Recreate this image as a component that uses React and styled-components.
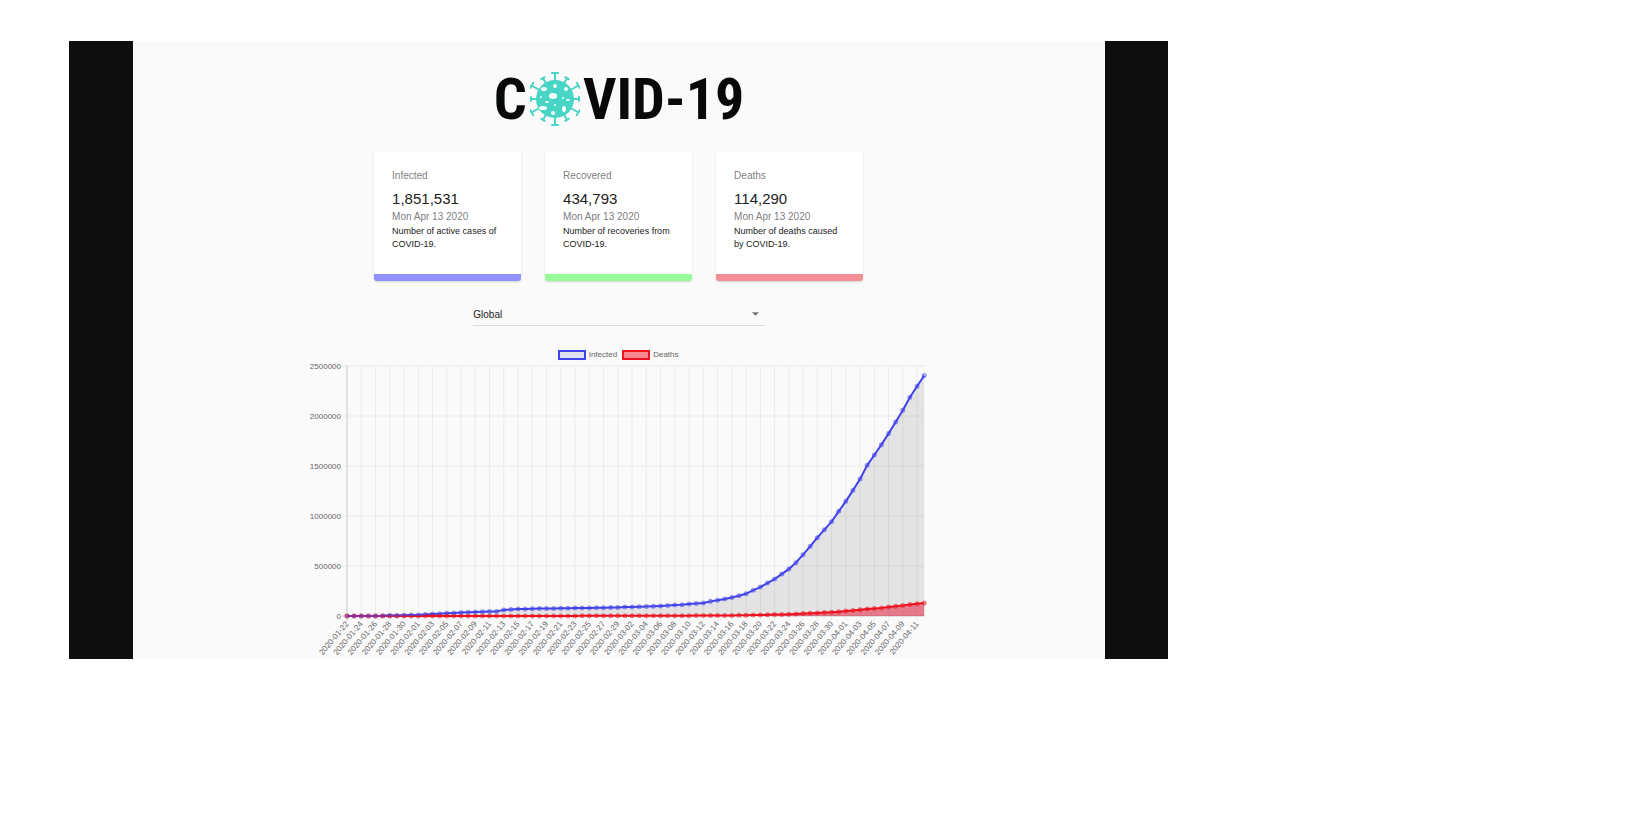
import React from "react";
import styled, { createGlobalStyle } from "styled-components";

const GlobalStyle = createGlobalStyle`
  * { box-sizing: border-box; }
  body {
    margin: 0;
    background: #fff;
    color: #212121;
    font-family: "Liberation Sans", Arial, sans-serif;
  }
`;

const Stage = styled.div`
  width: 66.7%;
  margin: 41px 0 0 69px;
  padding: 0 63px 0 64px;
  background: #0e0e0e;
`;

const Dashboard = styled.main`
  display: flex;
  flex-direction: column;
  align-items: center;
  padding-top: 31px;
  background: #fafafa;
`;

const Logo = styled.h1`
  display: flex;
  align-items: center;
  gap: 3px;
  height: 54px;
  margin: 0;
  color: #080a0a;
  font: bold 58px/54px "Liberation Sans Narrow", "Roboto Condensed", "Open Sans Condensed", "Noto Sans CJK SC", sans-serif;
`;

const VirusArt = styled.svg`
  width: 50px;
  height: 54px;
`;

const Cards = styled.section`
  display: grid;
  grid-template-columns: repeat(3, minmax(0, 147px));
  justify-content: center;
  gap: 24px;
  width: 100%;
  margin-top: 25px;
  padding-right: 1px;
`;

const Card = styled.article`
  padding: 17px 18px 23px;
  border-bottom: 7px solid ${(p) => p.$accent};
  border-radius: 3px;
  background: #fff;
  box-shadow: 0 1px 2px rgba(0, 0, 0, 0.16);
`;

const CardTitle = styled.h2`
  margin: 0 0 5px;
  color: #808080;
  font-size: 10px;
  font-weight: normal;
  line-height: 16px;
`;

const CardValue = styled.p`
  margin: 0;
  font-size: 15px;
  line-height: 20px;
`;

const CardDate = styled.p`
  margin: 0;
  color: #808080;
  font-size: 10px;
  line-height: 16px;
`;

const CardText = styled.p`
  margin: 0;
  font-size: 9px;
  line-height: 13px;
`;

const Picker = styled.label`
  display: flex;
  align-items: center;
  width: 30%;
  margin-top: 21px;
  padding: 1px 6px 0 0;
  border-bottom: 1px solid #dcdcdc;
`;

const CountrySelect = styled.select`
  flex: 1;
  height: 22px;
  padding: 0;
  border: 0;
  appearance: none;
  background: transparent;
  color: #212121;
  font: 10px "Liberation Sans", Arial, sans-serif;
`;

const Caret = styled.svg`
  width: 7px;
  height: 4px;
`;

const Legend = styled.ul`
  display: flex;
  gap: 5px;
  margin: 24px 0 0;
  padding: 0 2px 0 0;
  list-style: none;
`;

const LegendItem = styled.li`
  display: flex;
  align-items: center;
  gap: 3px;
  height: 10px;
  color: #666;
  font-size: 8px;
  line-height: 10px;
`;

const Swatch = styled.span`
  width: 28px;
  height: 10px;
  border: 2px solid ${(p) => p.$line};
  background: ${(p) => p.$fill};
`;

const Chart = styled.svg`
  display: block;
  width: 64%;

  text {
    fill: #666;
    font-size: 8px;
  }
`;

const BLUE = "#4343ea";
const RED = "#ee1220";

const stats = [
  { title: "Infected", value: "1,851,531", text: "Number of active cases of COVID-19.", accent: "#9191fb" },
  { title: "Recovered", value: "434,793", text: "Number of recoveries from COVID-19.", accent: "#97fb97" },
  { title: "Deaths", value: "114,290", text: "Number of deaths caused by COVID-19.", accent: "#f28e94" },
];

// Daily totals in thousands, starting on 2020-01-22.
const infected = [
  1, 1, 1, 1, 2, 3, 6, 6, 8, 10, 12, 17, 20, 24, 28, 31, 35, 38, 41, 44, 45,
  47, 61, 67, 70, 72, 74, 76, 77, 77, 78, 79, 80, 81, 82, 83, 84, 85, 87, 90,
  92, 94, 96, 99, 102, 106, 110, 114, 120, 126, 131, 147, 158, 170, 185, 203,
  224, 257, 290, 330, 370, 420, 470, 534, 614, 697, 784, 864, 944, 1047, 1147,
  1257, 1370, 1507, 1610, 1714, 1824, 1940, 2057, 2187, 2297, 2404,
];
const deaths = [
  0, 0, 0, 0, 0, 0, 0, 0, 0, 0, 0, 0, 0, 0, 1, 1, 1, 1, 1, 1, 1, 1, 1, 2, 2,
  2, 2, 2, 2, 2, 2, 2, 2, 3, 3, 3, 3, 3, 3, 3, 3, 3, 3, 3, 3, 4, 4, 4, 4, 5,
  5, 5, 6, 6, 7, 8, 9, 10, 11, 13, 15, 17, 19, 22, 25, 28, 31, 35, 39, 44, 50,
  56, 63, 70, 76, 82, 90, 98, 107, 115, 123, 132,
];

const PLOT = { left: 39, right: 616, top: 6, bottom: 256 };
const px = (i) => PLOT.left + (i * (PLOT.right - PLOT.left)) / (infected.length - 1);
const py = (v) => PLOT.bottom - v / 10;
const line = (data) => data.map((v, i) => `${px(i)},${py(v)}`).join(" ");
const area = (data) => `${PLOT.left},${PLOT.bottom} ${line(data)} ${PLOT.right},${PLOT.bottom}`;
const day = (i) => new Date(Date.UTC(2020, 0, 22 + i)).toISOString().slice(0, 10);

const evenDays = infected.map((_, i) => i).filter((i) => i % 2 === 0);
const levels = [0, 500, 1000, 1500, 2000, 2500];

function Series({ data, color, fill }) {
  return (
    <g>
      <polygon points={area(data)} fill={fill} />
      <polyline points={line(data)} fill="none" stroke={color} strokeWidth="2" strokeLinejoin="round" />
      {data.map((v, i) => (
        <circle key={i} cx={px(i)} cy={py(v)} r="2" fill={color} fillOpacity="0.35" stroke={color} strokeOpacity="0.5" />
      ))}
    </g>
  );
}

function CasesChart() {
  return (
    <Chart viewBox="0 0 622 299" role="img" aria-label="Infected and deaths by day">
      {evenDays.map((i) => (
        <line key={i} x1={px(i)} x2={px(i)} y1={PLOT.top} y2={PLOT.bottom + 5} stroke={i ? "#ebebeb" : "#c8c8c8"} />
      ))}
      {levels.map((v) => (
        <g key={v}>
          <line x1={PLOT.left - 5} x2={PLOT.right} y1={py(v)} y2={py(v)} stroke={v ? "#e9e9e9" : "#c8c8c8"} />
          <text x={PLOT.left - 6} y={py(v) + 3} textAnchor="end">{v * 1000}</text>
        </g>
      ))}
      <Series data={infected} color={BLUE} fill="rgba(0, 0, 0, 0.09)" />
      <Series data={deaths} color={RED} fill="rgba(228, 20, 50, 0.5)" />
      {evenDays.map((i) => (
        <text key={i} textAnchor="end" transform={`translate(${px(i) + 2} ${PLOT.bottom + 8}) rotate(-50)`}>
          {day(i)}
        </text>
      ))}
      <polyline points={line(infected.slice(0, 12))} fill="none" stroke={BLUE} strokeWidth="2" strokeOpacity="0.6" />
    </Chart>
  );
}

const spikeAngles = [0, 30, 60, 90, 120, 150, 180, 210, 240, 270, 300, 330];
const spots = [
  [25, 14, 2, 2], [14, 17, 3, 2], [36, 17, 2, 2], [23, 24, 4, 3], [11, 25, 1, 1],
  [33, 26, 1, 1], [38, 28, 2, 1], [17, 30, 2, 1], [25, 33, 1, 1], [13, 36, 4, 2],
  [34, 37, 2, 3], [23, 41, 2, 2],
];

function Virus() {
  return (
    <VirusArt viewBox="0 0 50 54" aria-label="O" role="img">
      <g stroke="#48d5c5" strokeLinecap="round">
        {spikeAngles.map((a) => {
          const tip = a % 180 === 0 ? 26 : a % 90 === 0 ? 24 : a % 60 === 0 ? 27 : 24;
          const cap = a % 90 === 0 && a % 180 !== 0 ? 2 : a % 60 === 0 ? 3 : 2;
          return (
            <path
              key={a}
              fill="none"
              strokeWidth="2"
              transform={`rotate(${a} 25 27)`}
              d={`M25 10V${27 - tip}M${25 - cap} ${27 - tip}h${cap * 2}`}
            />
          );
        })}
      </g>
      <circle cx="25" cy="27" r="19" fill="#48d5c5" />
      {spots.map(([x, y, rx, ry]) => (
        <ellipse key={`${x}-${y}`} cx={x} cy={y} rx={rx} ry={ry} fill="#f4fffd" />
      ))}
    </VirusArt>
  );
}

export default function App() {
  return (
    <>
      <GlobalStyle />
      <Stage>
        <Dashboard>
          <Logo>
            <span>C</span>
            <Virus />
            <span>VID-19</span>
          </Logo>
          <Cards>
            {stats.map((s) => (
              <Card key={s.title} $accent={s.accent}>
                <CardTitle>{s.title}</CardTitle>
                <CardValue>{s.value}</CardValue>
                <CardDate>Mon Apr 13 2020</CardDate>
                <CardText>{s.text}</CardText>
              </Card>
            ))}
          </Cards>
          <Picker>
            <CountrySelect aria-label="Country" defaultValue="global">
              <option value="global">Global</option>
            </CountrySelect>
            <Caret viewBox="0 0 6 3" aria-hidden="true">
              <path d="M0 0h6L3 3z" fill="#757575" />
            </Caret>
          </Picker>
          <Legend>
            <LegendItem><Swatch $line={BLUE} $fill="#e0e0f3" />Infected</LegendItem>
            <LegendItem><Swatch $line={RED} $fill="#fd8790" />Deaths</LegendItem>
          </Legend>
          <CasesChart />
        </Dashboard>
      </Stage>
    </>
  );
}
